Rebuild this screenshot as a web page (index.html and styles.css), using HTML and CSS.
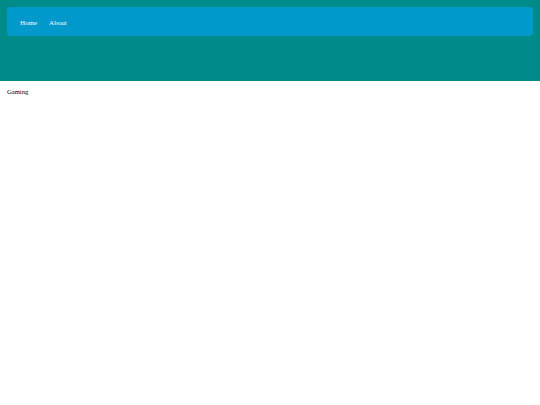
FILE: index.html
```html
<!DOCTYPE html>
<html>
<head>
<meta charset="utf-8">
<link rel="stylesheet" href="styles.css">
</head>
<body>
<header class="hero">
  <nav class="nav">
    <a class="nav-link" href="#">Home</a>
    <a class="nav-link" href="#">About</a>
  </nav>
</header>
<main class="content">
  <p class="category">Gaming</p>
</main>
</body>
</html>
```
FILE: styles.css
```css
html, body {
  margin: 0;
  padding: 0;
  background: #ffffff;
  font-family: "Liberation Serif", "DejaVu Serif", serif;
}
.hero {
  background: #008b8b;
  height: 81px;
  padding: 7px;
  box-sizing: border-box;
}
.nav {
  background: #0099cc;
  height: 29px;
  border-radius: 4px;
  display: flex;
  align-items: center;
  gap: 12px;
  padding: 2px 13px 0;
  box-sizing: border-box;
}
.nav-link {
  color: #ffffff;
  text-decoration: none;
  font-size: 7px;
}
.content {
  padding: 0 7px;
}
.category {
  margin: 6px 0 0;
  font-size: 6.6px;
  line-height: 10px;
  color: #000000;
}
```
